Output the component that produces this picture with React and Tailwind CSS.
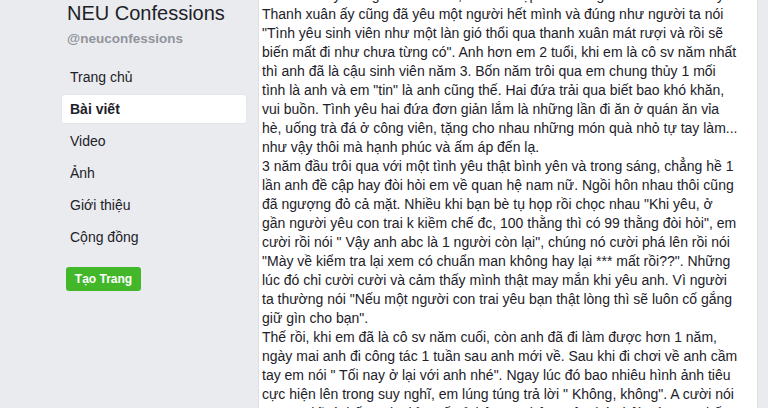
import React from 'react';

const navItems = ['Trang chủ', 'Bài viết', 'Video', 'Ảnh', 'Giới thiệu', 'Cộng đồng'];

const lines = [
  'Em năm nay đã ngoài hai mươi, cái tuổi đẹp nhất trong thời thanh xuân ấy',
  'Thanh xuân ấy cũng đã yêu một người hết mình và đúng như người ta nói',
  '"Tình yêu sinh viên như một làn gió thổi qua thanh xuân mát rượi và rồi sẽ',
  'biến mất đi như chưa từng có". Anh hơn em 2 tuổi, khi em là cô sv năm nhất',
  'thì anh đã là cậu sinh viên năm 3. Bốn năm trôi qua em chung thủy 1 mối',
  'tình là anh và em "tin" là anh cũng thế. Hai đứa trải qua biết bao khó khăn,',
  'vui buồn. Tình yêu hai đứa đơn giản lắm là những lần đi ăn ở quán ăn vỉa',
  'hè, uống trà đá ở công viên, tặng cho nhau những món quà nhỏ tự tay làm...',
  'như vậy thôi mà hạnh phúc và ấm áp đến lạ.',
  '3 năm đầu trôi qua với một tình yêu thật bình yên và trong sáng, chẳng hề 1',
  'lần anh đề cập hay đòi hỏi em về quan hệ nam nữ. Ngồi hôn nhau thôi cũng',
  'đã ngượng đỏ cả mặt. Nhiều khi bạn bè tụ họp rồi chọc nhau "Khi yêu, ở',
  'gần người yêu con trai k kiềm chế đc, 100 thằng thì có 99 thằng đòi hỏi", em',
  'cười rồi nói " Vậy anh abc là 1 người còn lại", chúng nó cười phá lên rồi nói',
  '"Mày về kiểm tra lại xem có chuẩn man không hay lại *** mất rồi??". Những',
  'lúc đó chỉ cười cười và cảm thấy mình thật may mắn khi yêu anh. Vì người',
  'ta thường nói "Nếu một người con trai yêu bạn thật lòng thì sẽ luôn cố gắng',
  'giữ gìn cho bạn".',
  'Thế rồi, khi em đã là cô sv năm cuối, còn anh đã đi làm được hơn 1 năm,',
  'ngày mai anh đi công tác 1 tuần sau anh mới về. Sau khi đi chơi về anh cầm',
  'tay em nói " Tối nay ở lại với anh nhé". Ngay lúc đó bao nhiêu hình ảnh tiêu',
  'cực hiện lên trong suy nghĩ, em lúng túng trả lời " Không, không". A cười nói',
  '" Em nghĩ gì thế? Anh chỉ muốn ở bên em thêm một chút thôi mà". Em thấy',
];

export default function App() {
  return (
    <div className="w-[768px] h-[408px] overflow-hidden bg-[#e9ebee] flex font-['Liberation_Sans',Arial,sans-serif] text-[#1d2129]">
      <aside className="w-[258px] shrink-0 pl-[62px] pr-[12px]">
        <div className="pl-[5px] pt-[1px]">
          <h1 className="text-[20px] leading-[24px] text-[#1d2129]">NEU Confessions</h1>
          <p className="mt-[5px] text-[13.5px] leading-[18px] font-bold text-[#90949c]">@neuconfessions</p>
        </div>
        <nav className="mt-[15px] flex flex-col gap-[4px]">
          {navItems.map((item) => {
            const active = item === 'Bài viết';
            return (
              <div
                key={item}
                className={
                  active
                    ? 'h-[28px] flex items-center pl-[8px] text-[14px] font-bold bg-white rounded-[2px] shadow-[0_0_0_1px_#e4e6ea]'
                    : 'h-[28px] flex items-center pl-[8px] text-[14px] text-[#1d2129]'
                }
              >
                {item}
              </div>
            );
          })}
        </nav>
        <button className="mt-[16px] ml-[4px] w-[75px] h-[24px] rounded-[3px] bg-[#42b72a] text-white text-[12px] font-bold flex items-center justify-center">
          Tạo Trang
        </button>
      </aside>
      <main className="w-[500px] shrink-0 bg-white border-x border-[#dddfe2] pl-[3px]">
        <div className="-mt-[14px] text-[14px] leading-[19px] text-[#1d2129]">
          {lines.map((line, i) => (
            <div key={i} className="whitespace-nowrap">{line}</div>
          ))}
        </div>
      </main>
    </div>
  );
}
